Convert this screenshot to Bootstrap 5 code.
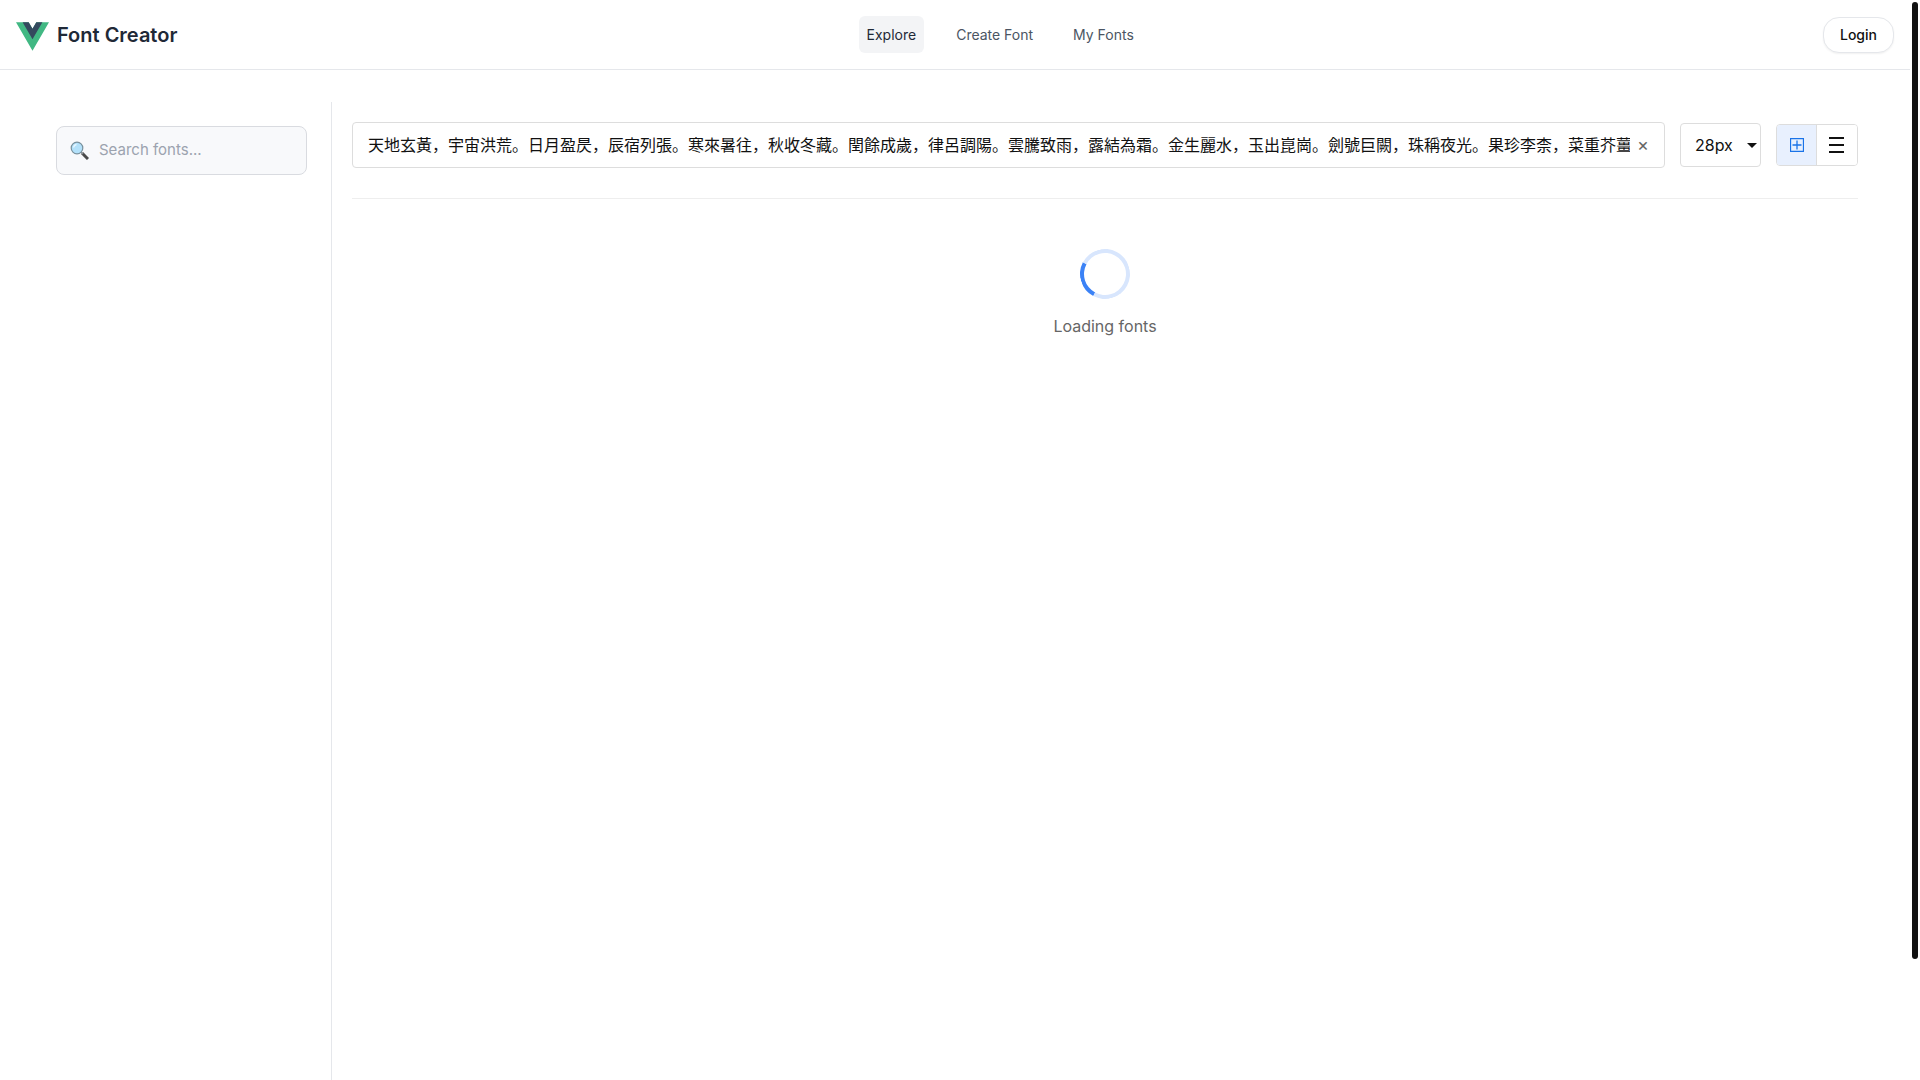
<!DOCTYPE html>
<html lang="en">
<head>
<meta charset="utf-8">
<meta name="viewport" content="width=device-width, initial-scale=1">
<title>Font Creator</title>
<link href="https://cdn.jsdelivr.net/npm/bootstrap@5.3.0/dist/css/bootstrap.min.css" rel="stylesheet">
<style>
  body { font-family: Inter, "Noto Sans CJK JP", sans-serif; font-size: 16px; color: #111; background: #fff; overflow: hidden; }
  .page-shell { min-height: 100vh; padding-right: 10px; }
  .scroll-thumb { position: fixed; top: 2px; right: 2px; width: 6px; height: 88.6vh; border-radius: 3px; background: #111; }
  .site-header { height: 70px; border-bottom: 1px solid #e5e7eb; }
  .brand-link { font-size: 20px; line-height: 28px; font-weight: 600; color: #1f2937; }
  .brand-link svg { margin-top: 3px; }
  .top-nav { gap: 24px; }
  .top-nav .nav-link { font-size: 14px; line-height: 21px; font-weight: 400; color: #4b5563; padding: 8px; border-radius: 6px; }
  .top-nav .nav-link.active { color: #1f2937; background: #f3f4f6; }
  .login-btn { font-size: 14px; line-height: 20px; font-weight: 500; color: #111; padding: 7px 16px; border: 1px solid #e5e7eb; border-radius: 16px; box-shadow: 0 1px 2px rgba(0,0,0,.06); }
  .workspace { padding: 32px 32px 0; }
  .filter-side { width: 300px; padding: 24px; border-right: 1px solid #e5e7eb; }
  .search-box { height: 49px; gap: 10px; padding: 0 13px; background: #f8f9fb; border: 1px solid #d9dbe0; border-radius: 8px; }
  .search-box input { font-size: 15px; line-height: 22px; height: 24px; padding: 0 0 2px; min-width: 0; outline: 0; }
  .search-box input::placeholder { color: #9ca3af; opacity: 1; }
  .viewer { padding: 20px; min-width: 0; }
  .tool-row { gap: 15px; padding-bottom: 30px; border-bottom: 1px solid #eee; }
  .sample-box { height: 46px; padding: 0 12px 0 15px; border: 1px solid #ddd; border-radius: 4px; min-width: 0; }
  .sample-box input { font-size: 16px; line-height: 24px; min-width: 0; color: #111; outline: 0; }
  .clear-btn { width: 18px; margin-left: 4px; font-size: 18px; line-height: 20px; color: #666; }
  .size-select { width: 81px; height: 44px; padding: 0 14px; font-size: 16px; color: #111; border: 1px solid #ddd; border-radius: 4px; appearance: none;
    background: #fff url("data:image/svg+xml,%3Csvg xmlns='http://www.w3.org/2000/svg' width='10' height='5'%3E%3Cpath d='M0 0h10L5 5z' fill='%23111'/%3E%3C/svg%3E") no-repeat right 3px center; }
  .view-switch { height: 42px; border: 1px solid #ddd; border-radius: 4px; overflow: hidden; }
  .view-switch button { width: 41px; background: #fff; color: #111; }
  .view-switch button.on { width: 39px; background: #e8f0fe; color: #1a73e8; }
  .view-switch button + button { border-left: 1px solid #ddd !important; }
  .load-area { padding-top: 50px; gap: 15px; color: #666; }
  .load-ring { width: 50px; height: 50px; border: 4px solid #d8e6fd; border-top-color: #3b82f6; border-radius: 50%; transform: rotate(253deg); }
</style>
</head>
<body>
<div class="page-shell d-flex flex-column">
  <header class="site-header d-flex align-items-center justify-content-between px-3 flex-shrink-0">
    <a href="#" class="brand-link d-flex align-items-center gap-2 text-decoration-none">
      <svg width="33" height="29" viewBox="0 0 261.76 226.69" aria-hidden="true">
        <path fill="#41b883" d="M161.096.001l-30.225 52.351L100.647.001H-.005l130.877 226.688L261.749.001z"/>
        <path fill="#34495e" d="M161.096.001l-30.225 52.351L100.647.001H52.346l78.526 136.01L209.398.001z"/>
      </svg>
      <span>Font Creator</span>
    </a>
    <nav class="top-nav nav">
      <a class="nav-link active" href="#" aria-current="page">Explore</a>
      <a class="nav-link" href="#">Create Font</a>
      <a class="nav-link" href="#">My Fonts</a>
    </nav>
    <button type="button" class="login-btn bg-white">Login</button>
  </header>

  <div class="workspace d-flex flex-grow-1">
    <aside class="filter-side flex-shrink-0">
      <label class="search-box d-flex align-items-center">
        <svg class="flex-shrink-0" width="19" height="19" viewBox="0 0 19 19" aria-hidden="true">
          <path d="M12 12l6 6" stroke="#4a4a4a" stroke-width="3"/>
          <path d="M10.500 10.500l2.500 2.500" stroke="#8a9297" stroke-width="1.500"/>
          <circle cx="7" cy="7" r="5.800" fill="#b3e1fa" stroke="#78909c" stroke-width="1.200"/>
          <path d="M3.500 6.500q.6-2.600 3-3" fill="none" stroke="#e8f7ff" stroke-width="1.300"/>
        </svg>
        <input type="text" class="flex-grow-1 border-0 bg-transparent" placeholder="Search fonts..." aria-label="Search fonts">
      </label>
    </aside>

    <main class="viewer flex-grow-1">
      <div class="tool-row d-flex align-items-center">
        <div class="sample-box d-flex align-items-center flex-grow-1">
          <input type="text" lang="ja" class="flex-grow-1 border-0 bg-transparent p-0" aria-label="Sample text" value="天地玄黃，宇宙洪荒。日月盈昃，辰宿列張。寒來暑往，秋收冬藏。閏餘成歲，律呂調陽。雲騰致雨，露結為霜。金生麗水，玉出崑崗。劍號巨闕，珠稱夜光。果珍李柰，菜重芥薑。">
          <button type="button" class="clear-btn border-0 bg-transparent p-0" aria-label="Clear">×</button>
        </div>
        <select class="size-select" aria-label="Font size"><option>28px</option><option>36px</option></select>
        <div class="view-switch d-flex">
          <button type="button" class="on border-0 p-0 d-flex align-items-center justify-content-center" aria-label="Grid view">
            <svg width="14" height="14" viewBox="0 0 14 14" fill="none" stroke="currentColor" aria-hidden="true"><path d="M.5.5h13v13H.5zM7 2.500v9M2.500 7h9" stroke-width="1.300"/></svg>
          </button>
          <button type="button" class="border-0 p-0 d-flex align-items-center justify-content-center" aria-label="List view">
            <svg width="16" height="16" viewBox="0 0 16 16" stroke="currentColor" stroke-width="2" aria-hidden="true"><path d="M0 1h15M0 8h15M0 15h15"/></svg>
          </button>
        </div>
      </div>
      <div class="load-area d-flex flex-column align-items-center" role="status">
        <div class="load-ring"></div>
        <div>Loading fonts</div>
      </div>
    </main>
  </div>
</div>
<div class="scroll-thumb" aria-hidden="true"></div>
<script src="https://cdn.jsdelivr.net/npm/bootstrap@5.3.0/dist/js/bootstrap.bundle.min.js"></script>
</body>
</html>
